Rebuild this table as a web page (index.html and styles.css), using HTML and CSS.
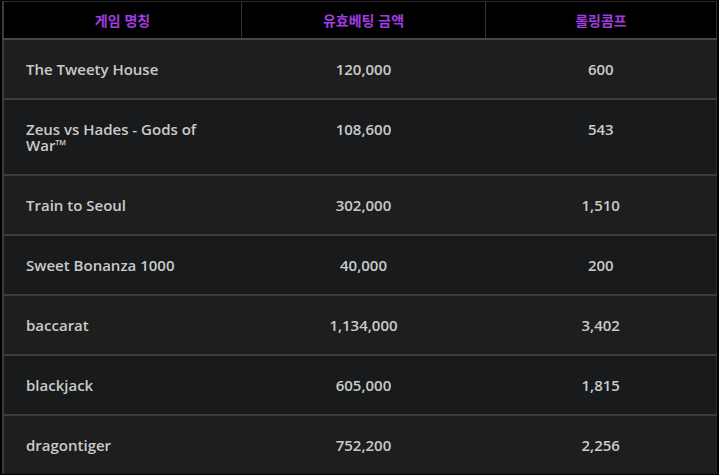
FILE: index.html
```html
<!DOCTYPE html>
<html lang="ko">
<head>
<meta charset="utf-8">
<link rel="stylesheet" href="styles.css">
</head>
<body>
<div class="frame">
<table class="comp">
  <thead>
    <tr><th>게임 명칭</th><th>유효베팅 금액</th><th>롤링콤프</th></tr>
  </thead>
  <tbody>
    <tr><td class="name">The Tweety House</td><td>120,000</td><td>600</td></tr>
    <tr class="alt"><td class="name">Zeus vs Hades - Gods of War™</td><td>108,600</td><td>543</td></tr>
    <tr><td class="name">Train to Seoul</td><td>302,000</td><td>1,510</td></tr>
    <tr class="alt"><td class="name">Sweet Bonanza 1000</td><td>40,000</td><td>200</td></tr>
    <tr><td class="name">baccarat</td><td>1,134,000</td><td>3,402</td></tr>
    <tr class="alt"><td class="name">blackjack</td><td>605,000</td><td>1,815</td></tr>
    <tr><td class="name">dragontiger</td><td>752,200</td><td>2,256</td></tr>
  </tbody>
</table>
</div>
</body>
</html>
```
FILE: styles.css
```css
html, body {
  margin: 0;
  padding: 0;
  background: #000;
}
.frame {
  width: 719px;
  height: 475px;
  box-sizing: border-box;
  padding: 1px 2px 1px 2px;
  background: #000;
  overflow: hidden;
}
.comp {
  width: 715px;
  border-collapse: collapse;
  table-layout: fixed;
  font-family: "Open Sans", "Noto Sans", "Noto Sans CJK KR", sans-serif;
  border-top: 1px solid #2c2c2c;
  border-left: 2px solid #3a3a3a;
  border-right: 1px solid #2a2a2a;
}
.comp th {
  height: 36px;
  padding: 0;
  background: #000;
  color: #a03ce0;
  font-family: "Noto Sans CJK KR", sans-serif;
  font-size: 14px;
  font-weight: 700;
  text-align: center;
  border-left: 1px solid #333;
  border-bottom: 2px solid #474747;
}
.comp th:first-child {
  width: 237px;
  border-left: none;
}
.comp th:nth-child(2) {
  width: 243px;
}
.comp td {
  padding: 21px 8px;
  height: 16px;
  line-height: 16px;
  font-size: 15px;
  font-weight: 600;
  color: #cacaca;
  text-align: center;
  vertical-align: top;
  background: #1e1e1e;
  border-bottom: 2px solid #3b3c3d;
}
.comp tr.alt td {
  background: #181a1c;
}
.comp td.name {
  text-align: left;
  padding-left: 22px;
  padding-right: 30px;
}
.comp tbody tr:last-child td {
  border-bottom: none;
}
```
